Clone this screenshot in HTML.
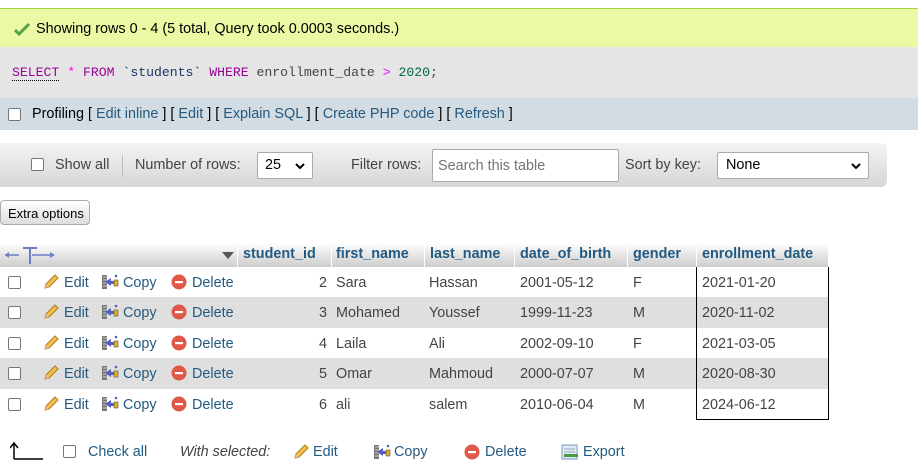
<!DOCTYPE html>
<html><head><meta charset="utf-8"><style>
*{margin:0;padding:0;box-sizing:border-box}
body{width:918px;height:475px;overflow:hidden;background:#fff;font-family:"Liberation Sans",Arial,sans-serif;font-size:14.4px;color:#444;position:relative}
.a{position:absolute;white-space:nowrap}
a,.lk{color:#235a81;text-decoration:none}
.cb{position:absolute;width:13px;height:13px;border:1px solid #767676;border-radius:2px;background:#fff}
.hd{font-weight:bold;color:#235a81}
.mono{font-family:"Liberation Mono",monospace;font-size:13.15px}
svg.i{position:absolute}
</style></head><body>
<div class="a" style="left:0;top:8px;width:918px;height:39px;background:#ebf8a4;border-top:1px solid #a2d246"></div>
<svg class="a" style="left:14px;top:22px" width="16" height="14" viewBox="0 0 16 14"><path d="M1 8 L5 12 L15 2" stroke="#52a447" stroke-width="3" fill="none"/></svg>
<div class="a" style="left:36px;top:21px;color:#000">Showing rows 0 - 4 (5 total, Query took 0.0003 seconds.)</div>
<div class="a" style="left:0;top:47px;width:918px;height:51px;background:#e5e5e5"></div>
<div class="a mono" style="left:12px;top:65px"><span style="color:#909;border-bottom:1px dotted #000">SELECT</span> <span style="color:#f0f">*</span> <span style="color:#909">FROM</span> <span style="color:#236">`students`</span> <span style="color:#909">WHERE</span> <span style="color:#444">enrollment_date</span> <span style="color:#f0f">&gt;</span> <span style="color:#064">2020</span>;</div>
<div class="a" style="left:0;top:98px;width:918px;height:32px;background:#d3dce3"></div>
<div class="cb" style="left:8px;top:108px"></div>
<div class="a" style="left:32px;top:106px;color:#000">Profiling <span>[ <a>Edit inline</a> ] [ <a>Edit</a> ] [ <a>Explain SQL</a> ] [ <a>Create PHP code</a> ] [ <a>Refresh</a> ]</span></div>
<div class="a" style="left:0;top:143px;width:887px;height:44px;background:linear-gradient(#f4f4f4,#d6d6d6);border-radius:0 6px 6px 0"></div>
<div class="cb" style="left:31px;top:158px"></div>
<div class="a" style="left:55px;top:157px">Show all</div>
<div class="a" style="left:122px;top:155px;width:1px;height:22px;background:#bbb"></div>
<div class="a" style="left:135px;top:157px">Number of rows:</div>
<div class="a" style="left:257px;top:152px;width:56px;height:27px;background:#fff;border:1px solid #aaa;border-radius:2px;padding:4px 0 0 7px;color:#000">25</div>
<svg class="i" style="left:295px;top:162px" width="10" height="8"><path d="M1 2 L5 6 L9 2" stroke="#000" stroke-width="2" fill="none"/></svg>
<div class="a" style="left:351px;top:157px">Filter rows:</div>
<div class="a" style="left:432px;top:149px;width:187px;height:33px;background:#fff;border:1px solid #aaa;border-radius:2px;padding:8px 0 0 5px;color:#757575">Search this table</div>
<div class="a" style="left:625px;top:157px">Sort by key:</div>
<div class="a" style="left:717px;top:152px;width:152px;height:27px;background:#fff;border:1px solid #aaa;border-radius:2px;padding:4px 0 0 8px;color:#000">None</div>
<svg class="i" style="left:851px;top:162px" width="10" height="8"><path d="M1 2 L5 6 L9 2" stroke="#000" stroke-width="2" fill="none"/></svg>
<div class="a" style="left:0;top:200px;width:90px;height:25px;background:linear-gradient(#fff,#ddd);border:1px solid #aaa;border-radius:4px;padding:5px 0 0 7px;color:#000;font-size:13px">Extra options</div>
<div class="a" style="left:0;top:243px;width:828px;height:24px;background:linear-gradient(#fff,#ccc)"></div>
<svg class="i" style="left:4px;top:245px" width="52" height="20"><g stroke="#6b7fc0" fill="#6b7fc0" stroke-width="1.5"><path d="M1 10 H15 M28 10 H50"/><path d="M1 10 L5 7 L5 13Z M51 10 L46 7 L46 13Z" stroke="none"/><path d="M19 3 H33 M26 3 V19" stroke-width="2"/></g></svg>
<div class="a" style="left:222px;top:252px;width:0;height:0;border-left:6px solid transparent;border-right:6px solid transparent;border-top:7px solid #555"></div>
<div class="a" style="left:237px;top:243px;width:1px;height:24px;background:#fff"></div>
<div class="a hd" style="left:243px;top:246px">student_id</div>
<div class="a" style="left:331px;top:243px;width:1px;height:24px;background:#fff"></div>
<div class="a hd" style="left:336px;top:246px">first_name</div>
<div class="a" style="left:424px;top:243px;width:1px;height:24px;background:#fff"></div>
<div class="a hd" style="left:430px;top:246px">last_name</div>
<div class="a" style="left:514px;top:243px;width:1px;height:24px;background:#fff"></div>
<div class="a hd" style="left:520px;top:246px">date_of_birth</div>
<div class="a" style="left:627px;top:243px;width:1px;height:24px;background:#fff"></div>
<div class="a hd" style="left:633px;top:246px">gender</div>
<div class="a" style="left:696px;top:243px;width:1px;height:24px;background:#fff"></div>
<div class="a hd" style="left:702px;top:246px">enrollment_date</div>
<div id="rows"></div>
<div class="a" style="left:696px;top:267px;width:133px;height:153px;border:1px solid #000;border-top:none"></div>
<svg class="a" style="left:10px;top:441px" width="34" height="20"><path d="M4 18 V3 M0 7 L4 2 L8 7 M4 18 H33" stroke="#000" stroke-width="1.5" fill="none"/></svg>
<div class="cb" style="left:63px;top:445px"></div>
<div class="a lk" style="left:88px;top:444px">Check all</div>
<div class="a" style="left:180px;top:444px;font-style:italic">With selected:</div>
<div id="bot"></div>
<div class="a lk" style="left:313px;top:444px">Edit</div>
<div class="a lk" style="left:394px;top:444px">Copy</div>
<div class="a lk" style="left:485px;top:444px">Delete</div>
<svg class="i" style="left:561px;top:444px" width="18" height="16"><rect x="1" y="1" width="15" height="14" fill="#dfe9f5" stroke="#7a9ac0"/><path d="M3 5H14M3 8H14" stroke="#9ab"/><rect x="3" y="10" width="14" height="3" fill="#4a9a40"/></svg>
<div class="a lk" style="left:583px;top:444px">Export</div>
<script>
function pencil(x,y){return '<svg class="i" style="left:'+x+'px;top:'+y+'px" width="18" height="18"><path d="M3 15 L4 11 L13 2 L16 5 L7 14 Z" fill="#f2c04a" stroke="#b07a20"/><path d="M3 15 L4 11 L7 14Z" fill="#e8b890"/></svg>';}
function copy(x,y){return '<svg class="i" style="left:'+x+'px;top:'+y+'px" width="18" height="18"><rect x="1" y="2" width="5" height="14" fill="#777"/><path d="M2 4H6M2 7H6M2 10H6M2 13H6" stroke="#ccc"/><path d="M4 9 L10 5 L10 13Z" fill="#5660c0"/><rect x="9" y="8" width="5" height="3" fill="#5660c0"/><rect x="13" y="7" width="4" height="6" fill="#e0b020" stroke="#555" stroke-width=".6"/><circle cx="15" cy="3" r="1.3" fill="#5660c0"/></svg>';}
function del(x,y){return '<svg class="i" style="left:'+x+'px;top:'+y+'px" width="16" height="16"><circle cx="8" cy="8" r="7.5" fill="#e05848"/><rect x="4" y="7" width="8" height="2.2" fill="#fff"/></svg>';}
var d=[["2","Sara","Hassan","2001-05-12","F","2021-01-20"],["3","Mohamed","Youssef","1999-11-23","M","2020-11-02"],["4","Laila","Ali","2002-09-10","F","2021-03-05"],["5","Omar","Mahmoud","2000-07-07","M","2020-08-30"],["6","ali","salem","2010-06-04","M","2024-06-12"]];
var h="";var tops=[267,297,328,358,389];
d.forEach(function(r,i){var t=tops[i];var bg=i%2?"#dfdfdf":"#fff";
h+='<div class="a" style="left:0;top:'+t+'px;width:828px;height:'+(i==4?30:(tops[i+1]-t))+'px;background:'+bg+'"></div>';
var y=t+7.5;
h+='<div class="cb" style="left:8px;top:'+(t+9)+'px"></div>';
h+=pencil(42,t+6)+'<div class="a lk" style="left:64px;top:'+y+'px">Edit</div>';
h+=copy(101,t+6)+'<div class="a lk" style="left:123px;top:'+y+'px">Copy</div>';
h+=del(171,t+7)+'<div class="a lk" style="left:192px;top:'+y+'px">Delete</div>';
h+='<div class="a" style="left:300px;width:27px;text-align:right;top:'+y+'px">'+r[0]+'</div>';
var xs=[336,429,520,633,702];
for(var k=1;k<6;k++)h+='<div class="a" style="left:'+xs[k-1]+'px;top:'+y+'px">'+r[k]+'</div>';
});
document.getElementById("rows").innerHTML=h;
document.getElementById("bot").innerHTML=pencil(292,443)+copy(373,443)+del(464,444);
</script>
</body></html>
